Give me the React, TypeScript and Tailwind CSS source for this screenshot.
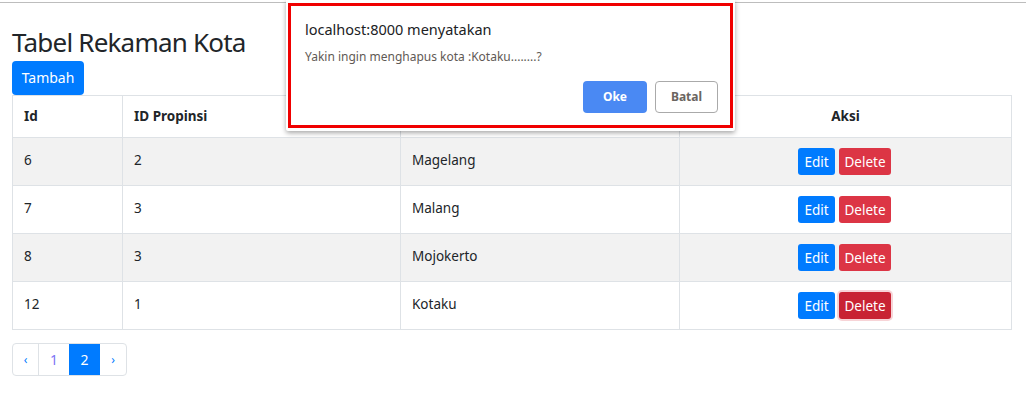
import React from "react";

const rows = [
  { id: "6", prov: "2", nama: "Magelang" },
  { id: "7", prov: "3", nama: "Malang" },
  { id: "8", prov: "3", nama: "Mojokerto" },
  { id: "12", prov: "1", nama: "Kotaku" },
];

export default function App() {
  const font = { fontFamily: '"Noto Sans", "Open Sans", sans-serif' };
  return (
    <div className="relative w-full h-[400px] bg-white overflow-hidden text-[#212529]" style={font}>
      <div className="mt-[2px] h-px bg-[#bdbdbd]" />
      <div className="pl-[12px] pr-[15px]">
        <h3 className="mt-[22px] mb-0 text-[26px] leading-[34px] tracking-[-0.8px] font-normal text-[#212529]">
          Tabel Rekaman Kota
        </h3>
        <button className="mt-[2px] h-[34px] w-[72px] rounded-[4px] bg-[#007bff] text-white text-[14px] leading-[20px]">
          Tambah
        </button>
        <table className="w-[999px] border-collapse text-[13.5px] table-fixed">
          <colgroup>
            <col className="w-[110px]" />
            <col className="w-[278px]" />
            <col className="w-[279px]" />
            <col className="w-[332px]" />
          </colgroup>
          <thead>
            <tr className="h-[42px]">
              <th className="border border-[#dee2e6] px-[11px] text-left font-bold">Id</th>
              <th className="border border-[#dee2e6] px-[11px] text-left font-bold">ID Propinsi</th>
              <th className="border border-[#dee2e6] px-[11px] text-left font-bold">Nama Kota</th>
              <th className="border border-[#dee2e6] px-[11px] text-center font-bold">Aksi</th>
            </tr>
          </thead>
          <tbody>
            {rows.map((r, i) => (
              <tr key={r.id} className={i % 2 === 0 ? "h-[48px] bg-[#f2f2f2]" : "h-[48px] bg-white"}>
                <td className="border border-[#dee2e6] px-[11px] pb-[3px]">{r.id}</td>
                <td className="border border-[#dee2e6] px-[11px] pb-[3px]">{r.prov}</td>
                <td className="border border-[#dee2e6] px-[11px] pb-[3px]">{r.nama}</td>
                <td className="border border-[#dee2e6] px-[11px]">
                  <div className="flex justify-center gap-[4px] pr-[2px]">
                    <button className="h-[27px] w-[37px] rounded-[3px] bg-[#007bff] text-white text-[13.5px] leading-[20px]">
                      Edit
                    </button>
                    <button
                      className={
                        i === 3
                          ? "h-[27px] w-[52px] rounded-[3px] bg-[#c82333] text-white text-[13.5px] leading-[20px] shadow-[0_0_0_2px_rgba(225,83,97,0.25)]"
                          : "h-[27px] w-[52px] rounded-[3px] bg-[#dc3545] text-white text-[13.5px] leading-[20px]"
                      }
                    >
                      Delete
                    </button>
                  </div>
                </td>
              </tr>
            ))}
          </tbody>
        </table>
        <div className="mt-[13px] flex w-fit rounded-[4px] border border-[#dee2e6] h-[33px] text-[14px] overflow-hidden">
          <div className="w-[26px] flex items-center justify-center text-[#007bff] border-r border-[#dee2e6] text-[12px]">‹</div>
          <div className="w-[30px] flex items-center justify-center text-[#7d74f5]">1</div>
          <div className="w-[31px] flex items-center justify-center bg-[#007bff] text-white">2</div>
          <div className="w-[26px] flex items-center justify-center text-[#007bff] text-[12px]">›</div>
        </div>
      </div>

      <div className="absolute left-[286px] top-0 w-[449px] h-[131px] bg-white shadow-[0_2px_5px_rgba(0,0,0,0.35)] rounded-b-[2px] p-[2px] pt-[3px]">
        <div className="h-[125px] border-[3px] border-[#f00000] pl-[14px] pr-[12px]">
          <div className="pt-[13px] text-[14.5px] leading-[20px] text-[#202124]">localhost:8000 menyatakan</div>
          <div className="mt-[9px] text-[12px] leading-[18px] text-[#5f5a55]">Yakin ingin menghapus kota :Kotaku........?</div>
          <div className="mt-[15px] flex justify-end gap-[8px]">
            <button className="h-[32px] w-[64px] rounded-[4px] bg-[#4a89f3] text-white text-[12px] font-bold">Oke</button>
            <button className="h-[32px] w-[63px] rounded-[4px] border border-[#aaaaaa] bg-white text-[#6b6560] text-[12px] font-bold">
              Batal
            </button>
          </div>
        </div>
      </div>
    </div>
  );
}
